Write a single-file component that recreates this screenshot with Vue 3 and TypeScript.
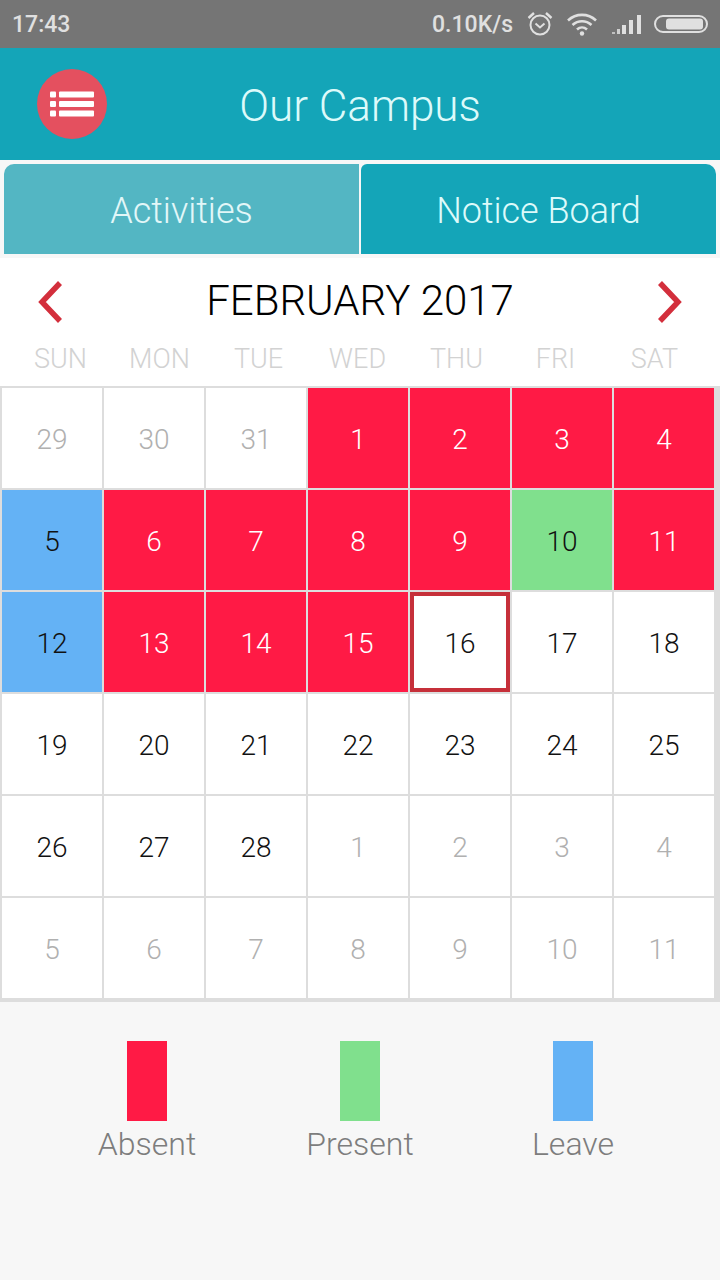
<script setup lang="ts">
type Kind = 'muted' | 'absent' | 'leave' | 'present' | 'plain' | 'today'
interface Day { label: number; kind: Kind }

const weekdays = ['SUN', 'MON', 'TUE', 'WED', 'THU', 'FRI', 'SAT']

const kindFor = (i: number): Kind => {
  if (i < 3 || i >= 31) return 'muted'
  if (i === 7 || i === 14) return 'leave'
  if (i === 12) return 'present'
  if (i === 18) return 'today'
  if (i < 18) return 'absent'
  return 'plain'
}
const labelFor = (i: number): number => {
  if (i < 3) return 29 + i
  if (i < 31) return i - 2
  return i - 30
}
const days: Day[] = Array.from({ length: 42 }, (_, i) => ({ label: labelFor(i), kind: kindFor(i) }))

const legend = [
  { name: 'Absent', kind: 'absent' },
  { name: 'Present', kind: 'present' },
  { name: 'Leave', kind: 'leave' },
]
</script>

<template>
  <div class="page">
    <div class="status">
      <span class="time">17:43</span>
      <div class="status-right">
        <span class="speed">0.10K/s</span>
        <svg class="alarm" width="28" height="26" viewBox="0 0 28 26" fill="none" stroke="#e0e0e0">
          <circle cx="14" cy="14" r="9.500" stroke-width="2" />
          <path d="M9.500 12.500l4.500 4 4.500-4" stroke-width="2" />
          <path d="M2.500 7L8 2M25.500 7L20 2" stroke-width="2.400" />
        </svg>
        <svg class="wifi" width="32" height="24" viewBox="0 0 32 24" fill="none" stroke="#e0e0e0" stroke-width="2.600">
          <path d="M2 8.500c8-7.500 20-7.500 28 0" />
          <path d="M6.500 13c5.500-5 13.500-5 19 0" />
          <path d="M11 17.500c3-2.700 7-2.700 10 0" />
          <circle cx="16" cy="21.500" r="2.200" fill="#e0e0e0" stroke="none" />
        </svg>
        <svg class="signal" width="30" height="22" viewBox="0 0 30 22" fill="#e0e0e0">
          <rect x="0" y="19" width="3" height="2" opacity=".7" />
          <rect x="5" y="16" width="3" height="5" opacity=".85" />
          <rect x="10" y="12" width="4" height="9" />
          <rect x="17" y="7" width="4" height="14" />
          <rect x="25" y="2" width="4" height="19" />
        </svg>
        <svg class="battery" width="54" height="18" viewBox="0 0 54 18" fill="none">
          <rect x="1" y="1" width="52" height="16" rx="8" stroke="#e0e0e0" stroke-width="2" />
          <rect x="12" y="3.500" width="37" height="11" rx="3" fill="#e0e0e0" />
        </svg>
      </div>
    </div>

    <header class="appbar">
      <div class="menu-btn">
        <svg width="46" height="28" viewBox="0 0 46 28" fill="#fff">
          <rect x="1" y="1.500" width="6" height="6" rx="1" />
          <rect x="10" y="1.500" width="35" height="6" rx="1" />
          <rect x="1" y="11" width="6" height="6" rx="1" />
          <rect x="10" y="11" width="35" height="6" rx="1" />
          <rect x="1" y="20.500" width="6" height="6" rx="1" />
          <rect x="10" y="20.500" width="35" height="6" rx="1" />
        </svg>
      </div>
      <h1 class="title">Our Campus</h1>
    </header>

    <nav class="tabs">
      <div class="tab tab-left">Activities</div>
      <div class="tab tab-right">Notice Board</div>
    </nav>

    <section class="calendar">
      <div class="month-row">
        <svg class="arrow" width="30" height="48" viewBox="0 0 30 48" fill="none" stroke="#d32f3c" stroke-width="5.500">
          <path d="M24 5L6 24l18 19" />
        </svg>
        <div class="month">FEBRUARY 2017</div>
        <svg class="arrow" width="30" height="48" viewBox="0 0 30 48" fill="none" stroke="#d32f3c" stroke-width="5.500">
          <path d="M6 5l18 19L6 43" />
        </svg>
      </div>
      <div class="weekdays">
        <span v-for="w in weekdays" :key="w">{{ w }}</span>
      </div>
      <div class="grid">
        <div v-for="(d, i) in days" :key="i" class="cell" :class="d.kind">{{ d.label }}</div>
      </div>
    </section>

    <footer class="legend">
      <div v-for="l in legend" :key="l.name" class="legend-item">
        <div class="swatch" :class="l.kind"></div>
        <span class="legend-label">{{ l.name }}</span>
      </div>
    </footer>
  </div>
</template>

<style>
html, body { margin: 0; background: #f7f7f7; }
</style>

<style scoped>
.page {
  width: 720px;
  height: 1280px;
  display: flex;
  flex-direction: column;
  overflow: hidden;
  background: #f7f7f7;
  font-family: Roboto, "Liberation Sans", sans-serif;
  font-weight: 300;
}
.status {
  height: 48px;
  flex: none;
  background: #757575;
  color: #e0e0e0;
  display: flex;
  align-items: center;
  justify-content: space-between;
  padding: 0 12px;
  box-sizing: border-box;
  font-weight: 500;
  font-size: 23px;
}
.status-right {
  display: flex;
  align-items: center;
}
.speed { margin-right: 13px; }
.alarm { margin-right: 12px; }
.wifi { margin-right: 14px; }
.signal { margin-right: 12px; }
.appbar {
  height: 112px;
  flex: none;
  background: #14a5b8;
  position: relative;
  display: flex;
  align-items: center;
  justify-content: center;
}
.menu-btn {
  position: absolute;
  left: 37px;
  top: 21px;
  width: 70px;
  height: 70px;
  border-radius: 50%;
  background: #e4505f;
  display: flex;
  align-items: center;
  justify-content: center;
}
.title {
  margin: 0;
  font-size: 44px;
  font-weight: 300;
  color: #dcfafa;
  padding-top: 4px;
  line-height: 52px;
}
.tabs {
  height: 90px;
  flex: none;
  margin: 4px;
  display: flex;
  gap: 2px;
}
.tab {
  flex: 1;
  display: flex;
  align-items: center;
  justify-content: center;
  font-size: 36px;
  padding-top: 4px;
  box-sizing: border-box;
}
.tab-left {
  background: #53b6c3;
  color: #e2f7f8;
  border-radius: 10px 0 0 0;
}
.tab-right {
  background: #14a5b8;
  color: #dcfafa;
  border-radius: 6px 10px 0 0;
}
.calendar {
  background: #fff;
  flex: none;
}
.month-row {
  height: 84px;
  display: flex;
  align-items: center;
  justify-content: space-between;
  padding: 0 36px;
  box-sizing: border-box;
}
.arrow { margin-top: 4px; }
.month {
  font-size: 42px;
  color: #000;
}
.weekdays {
  height: 44px;
  display: grid;
  grid-template-columns: repeat(7, 99px);
  padding-left: 11px;
  font-size: 27px;
  color: #d2d2d2;
  line-height: 32px;
  padding-top: 1px;
  box-sizing: border-box;
  text-align: center;
}
.grid {
  display: grid;
  grid-template-columns: repeat(7, 100px);
  grid-auto-rows: 100px;
  gap: 2px;
  padding: 2px 6px 4px 2px;
  background: #ddd;
}
.cell {
  display: flex;
  align-items: center;
  justify-content: center;
  font-size: 28px;
  padding-top: 2px;
  box-sizing: border-box;
  background: #fff;
  color: #111;
}
.cell.muted { color: #b0b0b0; }
.cell.absent { background: #ff1a45; color: #fff; }
.cell.leave { background: #64b2f5; color: #111; }
.cell.present { background: #80e08d; color: #111; }
.cell.today { border: 4px solid #c6303a; }
.legend {
  flex: 1;
  display: flex;
  justify-content: center;
  padding-top: 39px;
  box-sizing: border-box;
}
.legend-item {
  width: 213px;
  display: flex;
  flex-direction: column;
  align-items: center;
}
.swatch {
  width: 40px;
  height: 80px;
}
.swatch.absent { background: #ff1a45; }
.swatch.present { background: #80e08d; }
.swatch.leave { background: #64b2f5; }
.legend-label {
  margin-top: 4px;
  font-size: 32px;
  color: #7d7d7d;
}
</style>
